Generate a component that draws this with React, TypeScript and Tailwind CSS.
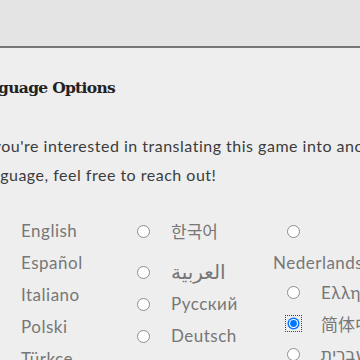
import React from "react";

const Radio = ({ checked = false }: { checked?: boolean }) => (
  <div className="relative w-[13px] h-[13px] shrink-0">
    {checked ? (
      <>
        <div className="absolute -inset-[2px] border border-dotted border-[#444]" />
        <svg width="13" height="13" viewBox="0 0 13 13" className="absolute inset-0">
          <circle cx="6.5" cy="6.5" r="6" fill="#0075ff" />
          <circle cx="6.5" cy="6.5" r="4.6" fill="#ffffff" />
          <circle cx="6.5" cy="6.5" r="3.4" fill="#0075ff" />
        </svg>
      </>
    ) : (
      <svg width="13" height="13" viewBox="0 0 13 13" className="absolute inset-0">
        <circle cx="6.5" cy="6.5" r="6" fill="#ffffff" stroke="#8d8d8d" strokeWidth="1" />
      </svg>
    )}
  </div>
);

const Item = ({
  label,
  checked,
  h = "h-[32px]",
  labelClass = "",
  extra = "",
}: {
  label: string;
  checked?: boolean;
  h?: string;
  labelClass?: string;
  extra?: string;
}) => (
  <div className={`flex items-center ${h} ${extra}`}>
    <div className="pl-[14px] pr-[21px] flex items-center">
      <Radio checked={checked} />
    </div>
    <span className={`text-[#777777] whitespace-nowrap ${labelClass}`}>{label}</span>
  </div>
);

export default function App() {
  return (
    <div
      className="w-[360px] h-[360px] overflow-hidden bg-[#eeeeee]"
      style={{ fontFamily: "Lato, 'Noto Sans', sans-serif" }}
    >
      <div className="h-[48px] bg-[#e4e4e4] border-b-2 border-[#767676]" />
      <div className="ml-[-22px] w-[460px]">
        <h1
          className="mt-[28px] ml-[-10px] text-[15.5px] leading-[24px] font-bold tracking-[-0.7px] text-[#222222]"
          style={{ fontFamily: "'DejaVu Serif', serif" }}
        >
          Language Options
        </h1>
        <p className="mt-[31px] text-[16px] leading-[29px] tracking-[0.5px] text-[#3c3c3c] w-[430px]">
          If you're interested in translating this game into another language, feel free to reach out!
        </p>
        <div className="mt-[26px] ml-[-5px] grid grid-cols-[150px_150px_150px] text-[17px] tracking-[0.5px]">
          <div className="flex flex-col">
            <Item label="English" />
            <Item label="Español" />
            <Item label="Italiano" />
            <Item label="Polski" />
            <Item label="Türkçe" />
          </div>
          <div className="flex flex-col">
            <Item label="한국어" labelClass="[font-family:'Noto_Sans_CJK_KR',sans-serif] text-[17px] tracking-normal" />
            <Item
              label="العربية"
              h="h-[41px]"
              extra="pt-[9px]"
              labelClass="[font-family:'DejaVu_Sans',sans-serif] text-[20px] tracking-normal"
            />
            <Item label="Русский" />
            <Item label="Deutsch" />
            <Item label="Français" />
          </div>
          <div className="flex flex-col">
            <div className="h-[33px] flex items-center pl-[14px]">
              <Radio />
            </div>
            <div className="h-[29px] flex items-center">
              <span className="text-[#777777] whitespace-nowrap">Nederlands</span>
            </div>
            <Item label="Ελληνικά" h="h-[31px]" />
            <Item
              label="简体中文"
              h="h-[31px]"
              checked
              labelClass="[font-family:'Noto_Sans_CJK_SC',sans-serif] tracking-normal"
            />
            <Item label="עברית" h="h-[31px]" labelClass="[font-family:'DejaVu_Sans',sans-serif] tracking-normal" />
          </div>
        </div>
      </div>
    </div>
  );
}
